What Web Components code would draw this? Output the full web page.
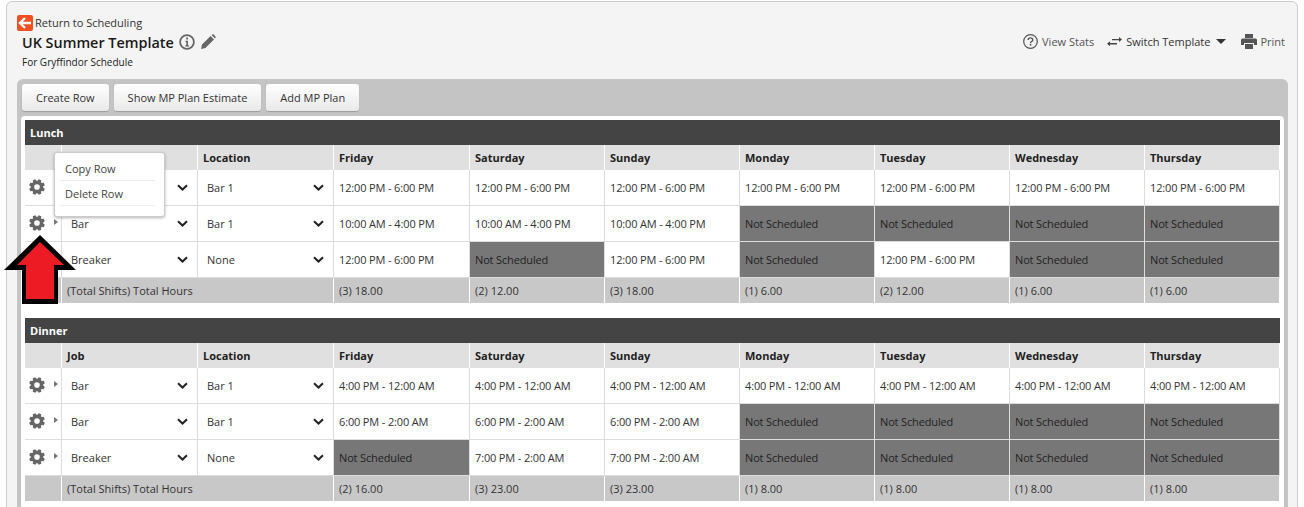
<!DOCTYPE html>
<html lang="en">
<head>
<meta charset="utf-8">
<title>UK Summer Template</title>
<style>
  html, body { margin: 0; height: 507px; overflow: hidden; background: #fff; font-family: "Open Sans", "Liberation Sans", sans-serif; font-size: 11px; color: #222; }
</style>
</head>
<body>
<template-page>
  <page-header slot="header"></page-header>
  <tool-bar slot="toolbar"></tool-bar>
  <shift-table id="lunch" slot="tables" name="Lunch"></shift-table>
  <shift-table id="dinner" slot="tables" name="Dinner"></shift-table>
</template-page>

<script>
// 8 tooth cog, built once and used in every row
function cogPath(cx, cy, outer, root, hole) {
  const pts = [];
  for (let i = 0; i < 8; i++) {
    const a = (i * Math.PI) / 4 + Math.PI / 8;
    [[-0.3, root], [-0.17, outer], [0.17, outer], [0.3, root]].forEach(([d, r]) => {
      pts.push((cx + r * Math.cos(a + d)).toFixed(2) + " " + (cy + r * Math.sin(a + d)).toFixed(2));
    });
  }
  return `M${pts.join("L")}ZM${cx - hole} ${cy}a${hole} ${hole} 0 1 0 ${hole * 2} 0a${hole} ${hole} 0 1 0 ${-hole * 2} 0Z`;
}
const COG = cogPath(8, 8, 8, 6.2, 2.8);

const DAYS = ["Friday", "Saturday", "Sunday", "Monday", "Tuesday", "Wednesday", "Thursday"];
const NS = "Not Scheduled";

const TABLES = {
  lunch: {
    rows: [
      ["", "Bar 1", Array(7).fill("12:00 PM - 6:00 PM")], // job text sits under the open menu
      ["Bar", "Bar 1", ["10:00 AM - 4:00 PM", "10:00 AM - 4:00 PM", "10:00 AM - 4:00 PM", NS, NS, NS, NS]],
      ["Breaker", "None", ["12:00 PM - 6:00 PM", NS, "12:00 PM - 6:00 PM", NS, "12:00 PM - 6:00 PM", NS, NS]],
    ],
    totals: ["(3) 18.00", "(2) 12.00", "(3) 18.00", "(1) 6.00", "(2) 12.00", "(1) 6.00", "(1) 6.00"],
  },
  dinner: {
    rows: [
      ["Bar", "Bar 1", Array(7).fill("4:00 PM - 12:00 AM")],
      ["Bar", "Bar 1", ["6:00 PM - 2:00 AM", "6:00 PM - 2:00 AM", "6:00 PM - 2:00 AM", NS, NS, NS, NS]],
      ["Breaker", "None", [NS, "7:00 PM - 2:00 AM", "7:00 PM - 2:00 AM", NS, NS, NS, NS]],
    ],
    totals: ["(2) 16.00", "(3) 23.00", "(3) 23.00", "(1) 8.00", "(1) 8.00", "(1) 8.00", "(1) 8.00"],
  },
};

class TemplatePage extends HTMLElement {
  constructor() {
    super();
    this.attachShadow({ mode: "open" });
    this.shadowRoot.innerHTML = `
      <style>
        :host { display: block; position: relative; height: 507px; overflow: hidden; }
        .panel {
          margin: 1px 0 0 6px; width: 1292px; box-sizing: border-box; height: 520px;
          background: #f4f4f4; border: 1px solid #ccc; border-radius: 6px 6px 0 0;
          padding: 0 9px 0 10px;
        }
        .gray { background: #c4c4c4; border-radius: 6px 6px 0 0; padding: 5px 4px 0; height: 440px; }
        .card { background: #fff; border-radius: 4px 4px 0 0; padding: 4px 4px 0; display: flex; flex-direction: column; gap: 15px; height: 420px; }
        .menu {
          position: absolute; left: 54px; top: 152px; width: 111px; height: 65px; box-sizing: border-box;
          background: #fff; border: 1px solid #ccc; border-radius: 3px; box-shadow: 0 1px 3px rgba(0,0,0,.3);
          padding: 4px 9px 0 5px; color: #444;
        }
        .menu div { height: 24px; line-height: 23px; padding-left: 5px; border-bottom: 1px solid #eee; box-sizing: border-box; }
        .menu div + div { height: 25px; line-height: 26px; }
        .arrow { position: absolute; left: 0; top: 230px; }
      </style>
      <div class="panel">
        <slot name="header"></slot>
        <div class="gray">
          <slot name="toolbar"></slot>
          <div class="card"><slot name="tables"></slot></div>
        </div>
      </div>
      <div class="menu"><div>Copy Row</div><div>Delete Row</div></div>
      <svg class="arrow" width="80" height="75" viewBox="0 230 80 75">
        <polygon points="40,235 4,270 22,270 22,304 58,304 58,270 76,270" fill="#000"/>
        <polygon points="40,242 17,265 26,265 26,299 54,299 54,265 64,265" fill="#ed1c24"/>
      </svg>`;
  }
}

class PageHeader extends HTMLElement {
  constructor() {
    super();
    this.attachShadow({ mode: "open" });
    this.shadowRoot.innerHTML = `
      <style>
        :host { display: flex; justify-content: space-between; height: 77px; box-sizing: border-box; padding-top: 12px; }
        .back { display: flex; align-items: center; gap: 2px; height: 17px; color: #333; }
        .title { display: flex; align-items: center; margin: 1px 0 0 5px; height: 20px; font-size: 14.4px; font-weight: 600; color: #1a1a1a; }
        .title svg { display: block; }
        .info { margin-left: 5px; }
        .pencil { margin-left: 5px; }
        .sub { margin: 4px 0 0 5px; font-size: 10px; color: #222; line-height: 13px; }
        .links { display: flex; align-items: center; height: 17px; margin-top: 19px; color: #555; }
        .stats, .print, .switch { display: flex; align-items: center; }
        .stats span { margin-left: 4px; }
        .switch { color: #333; margin-left: 13px; }
        .switch span { margin-left: 4px; }
        .print { margin-left: 15px; margin-right: 3px; }
        .print span { margin-left: 3px; }
        .caret { width: 0; height: 0; border: 5px solid transparent; border-top: 5px solid #333; border-bottom: 0; margin-left: 6px; }
      </style>
      <div>
        <div class="back">
          <svg width="16" height="16" viewBox="0 0 16 16"><rect width="16" height="16" rx="2" fill="#f04e23"/><path d="M8 3 3 8l5 5M3.5 8H14" fill="none" stroke="#fff" stroke-width="2.4"/></svg>
          <span>Return to Scheduling</span>
        </div>
        <div class="title">UK Summer Template
          <svg class="info" width="16" height="16" viewBox="0 0 16 16"><circle cx="8" cy="8" r="6.900" fill="none" stroke="#666" stroke-width="1.800"/><path d="M6.500 6.800h2.500v4.400h1v1.200H6.300v-1.200h1V8H6.500zM7.200 3.600H9v1.900H7.200z" fill="#666"/></svg>
          <svg class="pencil" width="16" height="16" viewBox="0 0 16 16"><path d="M1 15l1-4.400L10.600 2l3.400 3.400L5.400 14zM11.600 1l.6-.5c.5-.3 1-.3 1.400 0l1.900 1.900c.3.4.3.9 0 1.400l-.5.6z" fill="#666"/></svg>
        </div>
        <div class="sub">For Gryffindor Schedule</div>
      </div>
      <div class="links">
        <div class="stats">
          <svg width="15" height="15" viewBox="0 0 15 15"><circle cx="7.500" cy="7.500" r="6.800" fill="none" stroke="#555" stroke-width="1.200"/><path d="M5.200 6c0-2.800 4.600-2.800 4.600-.1 0 1.700-2.300 1.600-2.300 3.300" fill="none" stroke="#555" stroke-width="1.400"/><rect x="6.800" y="10" width="1.500" height="1.600" fill="#555"/></svg>
          <span>View Stats</span>
        </div>
        <div class="switch">
          <svg width="15" height="11" viewBox="0 0 15 11"><path d="M5 3h7V1l3 2.600-3 2.400V4.300H5zM10 7H3V5.200L0 7.800 3 10.300V8.400h7z" fill="#444"/></svg>
          <span>Switch Template</span><i class="caret"></i>
        </div>
        <div class="print">
          <svg width="16" height="15" viewBox="0 0 16 15"><path d="M4 0h8v4H4zM1.500 4.500h13A1.500 1.500 0 0 1 16 6v5h-3V9H3v2H0V6a1.500 1.500 0 0 1 1.500-1.500zM4 10h8v5H4z" fill="#555"/></svg>
          <span>Print</span>
        </div>
      </div>`;
  }
}

class ToolBar extends HTMLElement {
  constructor() {
    super();
    this.attachShadow({ mode: "open" });
    this.shadowRoot.innerHTML = `
      <style>
        :host { display: flex; gap: 5px; height: 32px; margin-left: 1px; }
        button {
          appearance: none; height: 27px; padding: 0 14px; border: 0; border-radius: 3px; font: inherit; color: #333;
          background: linear-gradient(#fff, #e9e9e9); box-shadow: 0 1px 1px rgba(0,0,0,.2);
        }
      </style>
      <button>Create Row</button><button>Show MP Plan Estimate</button><button>Add MP Plan</button>`;
  }
}

class JobSelect extends HTMLElement {
  constructor() {
    super();
    this.attachShadow({ mode: "open" });
    this.shadowRoot.innerHTML = `
      <style>
        :host { display: flex; align-items: center; flex: 1; padding: 0 9px; color: #333; }
        svg { display: block; margin-left: auto; }
      </style>
      <slot></slot>
      <svg width="11" height="7" viewBox="0 0 11 7"><path d="M1 1.200l4.500 4.300L10 1.200" fill="none" stroke="#222" stroke-width="2"/></svg>`;
  }
}

class ShiftTable extends HTMLElement {
  constructor() {
    super();
    this.attachShadow({ mode: "open" });
  }

  connectedCallback() {
    const data = TABLES[this.id];
    const head = [`<div class="h"></div>`, `<div class="h">${this.id === "dinner" ? "Job" : ""}</div>`, `<div class="h">Location</div>`]
      .concat(DAYS.map(d => `<div class="h">${d}</div>`)).join("");

    const rows = data.rows.map(([job, loc, shifts]) => `
      <div class="c act">
        <svg width="16" height="16" viewBox="0 0 16 16"><path d="${COG}" fill="#666" fill-rule="evenodd"/></svg>
        <i></i>
      </div>
      <div class="c sel"><job-select>${job}</job-select></div>
      <div class="c sel"><job-select>${loc}</job-select></div>
      ${shifts.map(s => `<div class="c shift${s === NS ? " off" : ""}">${s}</div>`).join("")}
    `).join("");

    this.shadowRoot.innerHTML = `
      <style>
        :host { display: block; }
        .name { height: 25px; line-height: 25px; background: #444; color: #fff; font-weight: 700; padding-left: 5px; width: 1255px; box-sizing: border-box; }
        .grid { display: grid; grid-template-columns: 37px 136px 136px 136px 135px 135px 135px 135px 135px 135px; width: 1255px; }
        .h { height: 25px; line-height: 25px; background: #e0e0e0; font-weight: 700; padding-left: 5px; color: #222; border-right: 1px solid #fff; box-sizing: border-box; }
        .c { height: 36px; display: flex; align-items: center; padding-left: 5px; box-sizing: border-box; border-right: 1px solid #ddd; border-bottom: 1px solid #ddd; background: #fff; color: #333; }
        .shift { letter-spacing: -.15px; }
        .c.off { background: #777; color: #222; }
        .c.sel { padding-left: 0; }
        .act { padding-left: 4px; }
        .act svg { margin-top: -2px; }
        .act i { width: 0; height: 0; border: 3px solid transparent; border-left: 4px solid #777; border-right: 0; margin: -4px 0 0 9px; }
        .t { height: 25px; line-height: 25px; background: #c8c8c8; padding-left: 5px; border-right: 1px solid #fff; box-sizing: border-box; color: #333; }
        .lbl { grid-column: 2 / span 2; }
      </style>
      <div class="name">${this.getAttribute("name")}</div>
      <div class="grid">
        ${head}
        ${rows}
        <div class="t"></div>
        <div class="t lbl">(Total Shifts) Total Hours</div>
        ${data.totals.map(t => `<div class="t">${t}</div>`).join("")}
      </div>`;
  }
}

customElements.define("template-page", TemplatePage);
customElements.define("page-header", PageHeader);
customElements.define("tool-bar", ToolBar);
customElements.define("job-select", JobSelect);
customElements.define("shift-table", ShiftTable);
</script>
</body>
</html>
